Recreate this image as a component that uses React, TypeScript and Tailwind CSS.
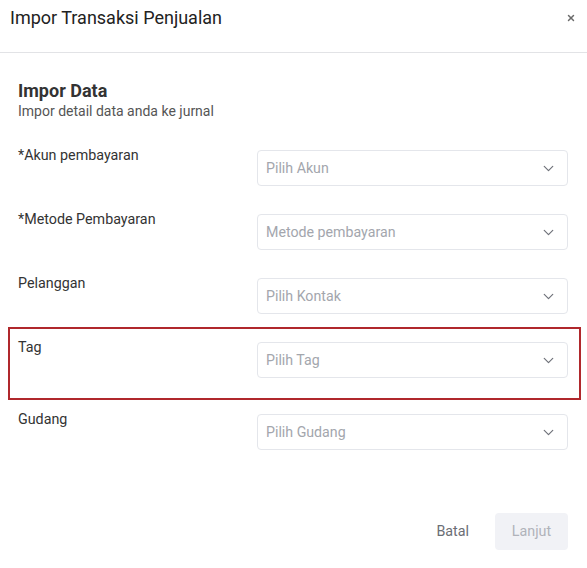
import { ChevronDown, X } from "lucide-react"

const font = { fontFamily: "Roboto, 'Noto Sans', sans-serif" }

function Select({ placeholder }: { placeholder: string }) {
  return (
    <div className="flex h-[36px] w-[311px] shrink-0 items-center justify-between rounded-[4px] border border-[#e4e6eb] bg-white pl-[8px] pr-[10px]">
      <span className="pt-[2px] text-[14.2px] text-[#a3a6ad]">{placeholder}</span>
      <ChevronDown className="h-[17px] w-[17px] text-[#6f727a]" strokeWidth={1.7} />
    </div>
  )
}

function Row({ label, placeholder }: { label: string; placeholder: string }) {
  return (
    <div className="flex items-start">
      <div className="-mt-[5px] w-[239px] shrink-0 text-[14.3px] leading-[20px] text-[#333]">{label}</div>
      <Select placeholder={placeholder} />
    </div>
  )
}

export default function App() {
  return (
    <div className="h-[568px] w-[587px] overflow-hidden bg-white" style={font}>
      {/* header */}
      <div className="flex h-[53px] items-start justify-between border-b border-[#e2e3e6] pl-[10px] pr-[11px] pt-[7px]">
        <h1 className="text-[18px] leading-[22px] text-[#222]">Impor Transaksi Penjualan</h1>
        <X className="mt-[6px] h-[10px] w-[10px] text-[#6b6b6b]" strokeWidth={3.5} />
      </div>

      {/* body */}
      <div className="pl-[18px] pr-[19px] pt-[27px]">
        <h2 className="text-[18px] font-bold leading-[22px] text-[#333]">Impor Data</h2>
        <p className="text-[14px] leading-[18px] text-[#555]">Impor detail data anda ke jurnal</p>

        <div className="mt-[30px] flex flex-col">
          <Row label="*Akun pembayaran" placeholder="Pilih Akun" />
          <div className="h-[28px]" />
          <Row label="*Metode Pembayaran" placeholder="Metode pembayaran" />
          <div className="h-[28px]" />
          <Row label="Pelanggan" placeholder="Pilih Kontak" />
          <div className="-ml-[10px] -mr-[13px] mt-[13px] border-2 border-[#b0282c] pb-[20px] pl-[8px] pr-[11px] pt-[13px]">
            <Row label="Tag" placeholder="Pilih Tag" />
          </div>
          <div className="mt-[14px]">
            <Row label="Gudang" placeholder="Pilih Gudang" />
          </div>
        </div>

        {/* footer */}
        <div className="mt-[63px] flex items-center justify-end gap-[26px]">
          <button className="text-[14.3px] text-[#6b6e75]">Batal</button>
          <button className="h-[37px] w-[73px] rounded-[4px] bg-[#f1f2f6] text-[14.3px] text-[#b0b3ba]">Lanjut</button>
        </div>
      </div>
    </div>
  )
}
